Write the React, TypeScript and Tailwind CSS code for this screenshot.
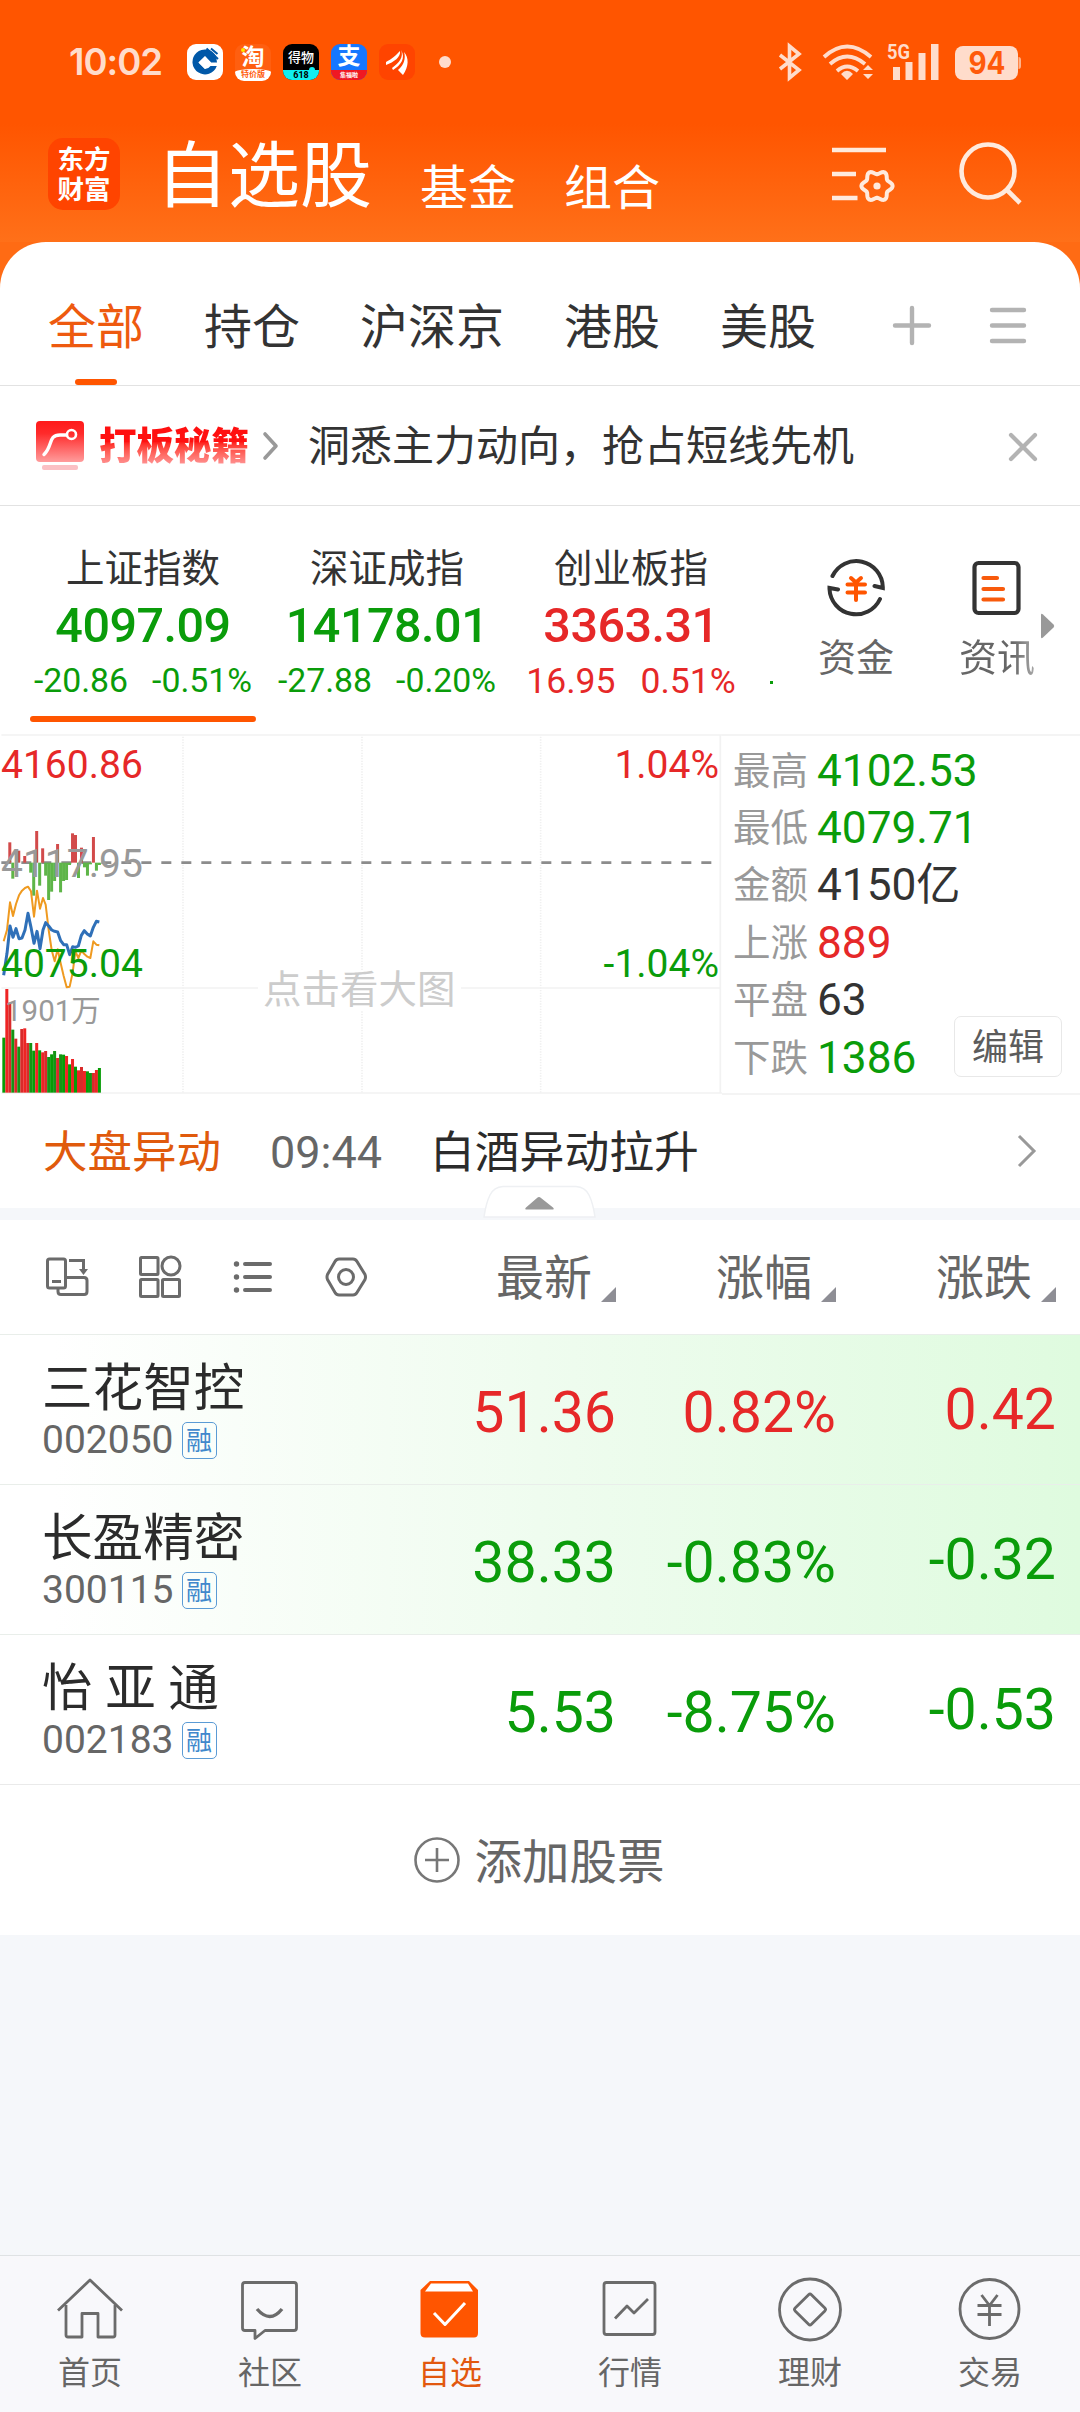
import React from "react";

const RED = "text-[#e62828]";
const GREEN = "text-[#0a9c0a]";

/* ---------- status bar ---------- */

function StatusBar() {
  return (
    <div className="flex h-[124px] items-center pl-[69px] text-[#ffdccb]">
      <span className="w-[118px] font-[Inter] text-[36.500px] leading-none font-semibold tracking-[-1px]">10:02</span>
      <div className="flex gap-3">
        <div className="size-9 rounded-[9px] bg-white">
          <svg viewBox="0 0 36 36" className="size-9">
            <path d="M29 12A12.5 12.5 0 1 0 29.8 22H23.5A7 7 0 0 1 18 25L11.5 18.5 18 12.5 24 18.5H30Z" fill="#0058a8" />
            <path d="M19.5 4.5 31 15M24 4.5 30.5 10" stroke="#0058a8" strokeWidth="2" fill="none" />
            <path d="M18 12 24 18.5 18 25 11.5 18.5Z" fill="#fff" />
          </svg>
        </div>
        <div className="relative flex size-9 flex-col items-center rounded-[9px] bg-[#ff5f10]">
          <span className="h-[24.5px] text-[23px] leading-[27px] font-bold text-white">淘</span>
          <span className="h-[12px] w-full rounded-t-[50%_3px] rounded-b-[9px] bg-white text-center text-[8px] leading-[12px] font-bold text-[#ff5a0a]">特价版</span>
          <div className="absolute top-[4px] left-[6px] size-[4px] rounded-full bg-[#ffe600]" />
        </div>
        <div className="relative flex size-9 flex-col items-center rounded-[9px] bg-black">
          <span className="h-[26px] text-[13px] leading-[28px] font-medium text-white">得物</span>
          <span className="h-[10px] w-full rounded-b-[9px] bg-[#10efef] text-center text-[9px] leading-[10px] font-bold text-black">618</span>
          <div className="absolute top-[23px] left-[26px] size-[6px] rounded-full bg-[#10efef]" />
        </div>
        <div className="flex size-9 flex-col items-center rounded-[9px] bg-[#1677ff]">
          <span className="h-[26px] text-[23px] leading-[26px] font-bold text-white">支</span>
          <span className="h-[10px] w-full rounded-b-[9px] bg-[#f01822] text-center text-[6px] leading-[9px] font-bold text-white">集福啦</span>
        </div>
        <div className="size-9 rounded-[9px] bg-[#ff4400]">
          <svg viewBox="0 0 36 36" className="size-9" fill="#fff">
            <path d="M7 18C13 15 16 12 21 7 22 13 15 18 7 21Z" />
            <path d="M22 6C25 13 20 19 13 24L14 26C22 21 27 14 22 6Z" />
            <path d="M25 8C30 14 30 22 24 31L19 26C25 21 27 14 25 8Z" />
          </svg>
        </div>
      </div>
      <div className="ml-6 size-3 rounded-full bg-[#ffdccb]" />
      <svg className="ml-[326px] h-[44px] w-[245px] overflow-visible" viewBox="777 40 245 44" fill="none">
        <path d="M780 55 799 70 789.500 78V46L799 54 780 69" stroke="#ffdccb" strokeWidth="3.600" />
        <path d="M824 57Q847 36 871 57M830 64Q847 49 865 64M837 71Q847 62 858 71" stroke="#ffdccb" strokeWidth="3.800" />
        <path d="M841 74Q847 67.500 853 74L847 80ZM863 70 868 65 873 70ZM863 74 868 79 873 74Z" fill="#ffdccb" />
        <path d="M893 67h7v13h-7ZM905.500 62h7v18h-7ZM918.500 53h7v27h-7ZM931 44h7.500v36h-7.500Z" fill="#ffdccb" />
        <text x="887" y="59" fontFamily="Roboto" fontSize="20" fontWeight="700" textLength="23" lengthAdjust="spacingAndGlyphs" fill="#ffdccb">5G</text>
        <rect x="955" y="46" width="63" height="34" rx="8" fill="#ffdccb" />
        <path d="M1018.500 57Q1021 57 1021 60V66Q1021 69 1018.500 69Z" fill="#ffb38c" />
        <text x="987" y="74" textAnchor="middle" fontFamily="Inter" fontSize="31" fontWeight="700" textLength="37" lengthAdjust="spacingAndGlyphs" fill="#ff5a0a">94</text>
      </svg>
    </div>
  );
}

/* ---------- title bar ---------- */

// Outline of the six-lobed settings flower.
const flower =
  Array.from({ length: 72 }, (_, i) => {
    const a = (i * Math.PI) / 36;
    const r = 13.7 + 1.9 * Math.cos(6 * a);
    return `${i ? "L" : "M"}${(876 + r * Math.cos(a)).toFixed(2)} ${(186 + r * Math.sin(a)).toFixed(2)}`;
  }).join("") + "Z";

function TitleBar() {
  return (
    <div className="flex h-[118px] text-white">
      <div className="mt-[14px] ml-12 flex size-[72px] flex-col items-center rounded-[15px] bg-[#ff4400] pt-[7px] text-[26.500px] leading-[30px] font-bold">
        <span>东方</span>
        <span>财富</span>
      </div>
      <span className="mt-[15px] ml-[36px] text-[72px] leading-[76px]">自选股</span>
      <span className="mt-[39px] ml-[48px] text-[48px] leading-[52px]">基金</span>
      <span className="mt-[39px] ml-[48px] text-[48px] leading-[52px]">组合</span>
      <svg className="mt-[18px] ml-[171px] h-[70px] w-[192px]" viewBox="830 142 192 70" fill="none" stroke="#ffeadd" strokeWidth="4.600">
        <path d="M831 150h54M831 174h24M831 198h25.500" />
        <path d={flower} strokeWidth="4" strokeLinejoin="round" />
        <circle cx="876" cy="186" r="3.600" fill="#ffeadd" stroke="none" />
        <circle cx="987" cy="171" r="26.500" />
        <path d="M1005.500 189.500 1019 203" />
      </svg>
    </div>
  );
}

/* ---------- category tabs ---------- */

function CategoryTabs() {
  return (
    <div className="flex h-[144px] items-start border-b border-[#e2e2e2] text-[48px] leading-[52px] text-[#333]">
      <div className="relative ml-12 pt-[60px] text-[#ee5a0f]">
        全部
        <div className="absolute top-[137px] left-[27px] h-[6px] w-[42px] rounded-full bg-[#ff5500]" />
      </div>
      <span className="ml-[60px] pt-[60px]">持仓</span>
      <span className="ml-[60px] pt-[60px]">沪深京</span>
      <span className="ml-[60px] pt-[60px]">港股</span>
      <span className="ml-[60px] pt-[60px]">美股</span>
      <svg className="mt-[60px] ml-[72px] h-12 w-[142px]" viewBox="888 302 142 48" stroke="#b3b3b3" strokeWidth="4.400" strokeLinecap="round">
        <path d="M895 325.500H929M912 308V343M992 310h32M992 325.500h32M992 341h32" />
      </svg>
    </div>
  );
}

function PromoRow() {
  return (
    <div className="flex h-[120px] items-center border-b border-[#e2e2e2] pl-9">
      <svg className="h-[50px] w-12" viewBox="0 0 48 50">
        <defs>
          <linearGradient id="promo" x1="0" y1="0" x2="0" y2="1">
            <stop offset="0" stopColor="#ff1a1a" />
            <stop offset="0.3" stopColor="#ff2a2a" />
            <stop offset="1" stopColor="#ff9c9c" />
          </linearGradient>
        </defs>
        <rect width="48" height="41" rx="4" fill="url(#promo)" />
        <path d="M8 33.500C17 25 12 14 24 14H30" stroke="#fff" strokeWidth="3.400" fill="none" strokeLinecap="round" />
        <circle cx="35.500" cy="13.500" r="4.500" stroke="#fff" strokeWidth="2.600" fill="none" />
        <rect x="6" y="44" width="36" height="5" rx="2" fill="#fbc0c4" />
      </svg>
      <span className="ml-[15px] w-[150px] bg-gradient-to-b from-[#ff1010] from-40% to-[#ff8f8f] to-90% bg-clip-text text-[37.500px] leading-[44px] font-black text-transparent">打板秘籍</span>
      <svg className="ml-[13px] h-[30px] w-[18px]" viewBox="0 0 18 30" fill="none" stroke="#999" strokeWidth="3.600" strokeLinecap="round" strokeLinejoin="round">
        <path d="M3 3 14 15 3 27" />
      </svg>
      <span className="ml-[28px] w-[561px] pt-[2px] text-[42px] leading-[46px] whitespace-nowrap text-[#333]">洞悉主力动向，抢占短线先机</span>
      <svg className="mt-[2px] ml-[138px] h-8 w-8" viewBox="0 0 32 32" stroke="#b3b3b3" strokeWidth="4.200" strokeLinecap="round">
        <path d="M4 4 28 28M28 4 4 28" />
      </svg>
    </div>
  );
}

/* ---------- market indices ---------- */

const indices = [
  { name: "上证指数", value: "4097.09", diff: "-20.86", pct: "-0.51%", up: false, active: true },
  { name: "深证成指", value: "14178.01", diff: "-27.88", pct: "-0.20%", up: false, active: false },
  { name: "创业板指", value: "3363.31", diff: "16.95", pct: "0.51%", up: true, active: false },
];

function IndexStrip() {
  return (
    <div className="flex h-[228px] pl-[21px]">
      {indices.map((i) => (
        <div key={i.name} className="relative flex w-[244px] flex-col items-center">
          <span className="mt-[42px] text-[38.500px] leading-[42px] text-[#333]">{i.name}</span>
          <span className={`mt-[10px] text-[48.500px] leading-[52px] font-medium tracking-[-0.5px] ${i.up ? RED : GREEN}`}>{i.value}</span>
          <span className={`mt-[9px] flex leading-[40px] ${i.up ? `gap-[25px] text-[35.500px] ${RED}` : `gap-[24px] text-[33.800px] ${GREEN}`}`}>
            <span>{i.diff}</span>
            <span>{i.pct}</span>
          </span>
          {i.active && <div className="absolute top-[210px] left-[9px] h-[6px] w-[226px] rounded-full bg-[#ff5500]" />}
        </div>
      ))}
      <div className="mt-[175px] ml-[17px] h-[3px] w-[3px] bg-[#0a9c0a]" />
      <div className="ml-[43px] flex w-[80px] flex-col items-center pt-[52px]">
        <svg className="h-[60px] w-[60px]" viewBox="826 557 60 60" fill="none" strokeLinecap="round" strokeWidth="4">
          <path d="M832.500 575A26.500 26.500 0 0 1 882.800 586V587L874.500 585M880 598A26.500 26.500 0 0 1 829.500 588V587L838 588.500" stroke="#333" />
          <path d="M851 577 856 581.500 861 577M847.500 583.500H865M847.500 591.500H865M856 582V599" stroke="#ff5500" />
        </svg>
        <span className="mt-[19px] text-[38px] leading-[42px] text-[#666]">资金</span>
      </div>
      <div className="ml-[61px] flex w-[80px] flex-col items-center pt-[52px]">
        <svg className="h-[60px] w-[60px]" viewBox="968 557 60 60" fill="none" strokeLinecap="round" strokeWidth="4.200">
          <rect x="975.500" y="562" width="44" height="50" rx="4" stroke="#333" />
          <path d="M984.500 577H998M984.500 588H1004M984.500 598.500H1004" stroke="#f85a0c" />
        </svg>
        <span className="mt-[19px] bg-gradient-to-r from-[#666] from-70% to-[#aaa] bg-clip-text text-[38px] leading-[42px] text-transparent">资讯</span>
      </div>
      <svg className="mt-[107px] h-[26px] w-[18px]" viewBox="0 0 18 26">
        <path d="M4 2V24Q4 26 6 24.500L16.500 14.500Q18 13 16.500 11.500L6 1.500Q4 0 4 2Z" fill="#999" />
      </svg>
    </div>
  );
}

/* ---------- minute chart ---------- */

// Volume bar tops in chart units, "r" rising and "g" falling.
const volume: [string, number][] = [
  ["g", 923], ["r", 777], ["r", 818], ["g", 899], ["r", 926], ["g", 950], ["r", 897], ["r", 895], ["r", 939],
  ["g", 939], ["g", 962], ["r", 939], ["g", 961], ["r", 967], ["r", 963], ["g", 981], ["g", 973], ["g", 963],
  ["r", 984], ["g", 973], ["g", 974], ["r", 978], ["g", 1003], ["r", 987], ["g", 1010], ["r", 1021], ["r", 1011],
  ["r", 1023], ["g", 1024], ["g", 1029], ["r", 1029], ["r", 1020], ["g", 1014],
];

// Momentum bars around the previous close: [slot, end].
const momentum: [number, number][] = [
  [2, 337], [5, 362], [7, 378], [11, 303], [13, 355], [18, 342], [23, 310], [24, 315], [26, 353], [30, 321],
  [3, 446], [9, 428], [10, 497], [12, 467], [14, 437], [15, 510], [16, 485], [17, 453], [19, 487], [20, 453],
  [21, 450], [22, 405], [25, 444], [27, 412], [28, 437], [29, 403], [31, 422], [32, 405],
];

const MID = 398;

function MinuteChart() {
  return (
    <div className="relative h-[361px] w-[722px] text-[39px] leading-[40px]">
      <svg className="block h-[361px] w-[722px]" viewBox="0 0 722 361" fill="none">
        <g transform="translate(0 -4) scale(0.33333)">
          <path d="M549 20V1088M1086 20V1088M1622 20V1088" stroke="#f0f0f0" strokeWidth="5" strokeDasharray="4 4" />
          <path d="M4 15H2166M4 774H2160M4 1089H2166M2161 15V1089" stroke="#f2f2f2" strokeWidth="5" />
          <path d="M4 398H2140" stroke="#8c8c8c" strokeWidth="8" strokeDasharray="30 30" />
          {momentum.map(([i, end]) => (
            <rect key={i} x={7 + i * 8.96} y={Math.min(MID, end)} width="9" height={Math.abs(end - MID)} fill={end < MID ? "#d24a4a" : "#5eb548"} />
          ))}
          {volume.map(([c, top], i) => (
            <rect key={i} x={7 + i * 8.96} y={top} width="9" height={1088 - top} fill={c === "r" ? (i % 2 ? "#ee2424" : "#d92a2a") : i % 2 ? "#149414" : "#069c06"} />
          ))}
        </g>
      </svg>
      <div className="absolute top-[110px] left-[1px] text-[#999]">4117.95</div>
      <svg className="absolute top-0 left-0 h-[361px] w-[722px]" viewBox="0 0 722 361" fill="none">
        <g transform="translate(0 -4) scale(0.33333)" strokeLinejoin="round">
          <path
            d="M11 634 21 600 30 517 39 558 48 522 57 496 66 482 75 474 84 470 93 484 102 560 111 482 120 536 129 504 137 524 146 600 155 660 164 694 173 658 182 700 191 738 200 772 209 770 218 728 226 664 235 684 244 662 253 672 262 680 271 684 280 634 289 644 298 646"
            stroke="#ef9a20"
            strokeWidth="6"
          />
          <path
            d="M11 736 21 670 30 588 39 622 48 596 57 626 66 624 75 600 84 550 93 592 102 640 111 604 120 656 129 600 137 578 146 588 155 600 164 604 173 606 182 632 191 644 200 644 209 674 218 650 226 652 235 648 244 616 253 602 262 612 271 618 280 592 289 574 298 576"
            stroke="#2f70b8"
            strokeWidth="9"
          />
        </g>
      </svg>
      <div className={`absolute top-[11px] left-[1px] ${RED}`}>4160.86</div>
      <div className={`absolute top-[210px] left-[1px] ${GREEN}`}>4075.04</div>
      <div className="absolute top-[257px] left-[5px] text-[29.500px] text-[#999]">1901万</div>
      <div className={`absolute top-[11px] right-[3px] ${RED}`}>1.04%</div>
      <div className={`absolute top-[210px] right-[3px] ${GREEN}`}>-1.04%</div>
      <div className="absolute top-[236px] left-[258px] bg-white px-[5px] text-[38.500px] text-[#ccc]">点击看大图</div>
    </div>
  );
}

const stats = [
  { label: "最高", value: "4102.53", color: GREEN },
  { label: "最低", value: "4079.71", color: GREEN },
  { label: "金额", value: "4150亿", color: "text-[#333]" },
  { label: "上涨", value: "889", color: RED },
  { label: "平盘", value: "63", color: "text-[#333]" },
  { label: "下跌", value: "1386", color: GREEN },
];

function StatsPanel() {
  return (
    <div className="relative flex-1 border-y-2 border-[#f4f4f4] pt-[6px] pl-[11px]">
      {stats.map((s) => (
        <div key={s.label} className="flex h-[57.400px] items-center leading-[50px]">
          <span className="w-[84px] text-[37.500px] text-[#999]">{s.label}</span>
          <span className={`text-[44.200px] ${s.color}`}>{s.value}</span>
        </div>
      ))}
      <div className="absolute top-[280px] right-[18px] flex h-[61px] w-[108px] items-center justify-center rounded-[7px] border border-[#e8e8e8] bg-white pt-[3px] text-[36px] leading-none text-[#5c5c5c]">
        编辑
      </div>
    </div>
  );
}

/* ---------- news ---------- */

function NewsRow() {
  return (
    <div className="relative flex h-[125px] items-start border-b-[12px] border-[#f5f7fa]">
      <span className="mt-[33px] ml-[43px] w-[227px] text-[44.500px] leading-[50px] text-[#e05a0c]">大盘异动</span>
      <span className="mt-[33px] w-[160px] text-[45px] leading-[50px] text-[#666]">09:44</span>
      <span className="mt-[33px] w-[585px] text-[44.800px] leading-[50px] text-[#2b2b2b]">白酒异动拉升</span>
      <svg className="mt-[38px] h-[36px] w-[24px]" viewBox="0 0 24 36" fill="none" stroke="#999" strokeWidth="3">
        <path d="M4 3 19 18 4 33" />
      </svg>
      <svg className="absolute top-[90px] left-[483px] h-[34px] w-[114px]" viewBox="0 0 114 34">
        <path d="M1 32Q3 18 7 10Q11 2 20 1.500H93Q102 2 106 10Q110 18 112 32Z" fill="#fff" stroke="#eef0f3" strokeWidth="1.500" />
        <path d="M43 22.500 54 13Q56 11 58 13L70 22.500Q72 24.500 69 24.500H44Q41 24.500 43 22.500Z" fill="#999" />
      </svg>
    </div>
  );
}

/* ---------- watch list ---------- */

function ListHeader() {
  return (
    <div className="flex h-[114px] items-start text-[48px] leading-[52px] text-[#666]">
      <svg className="mt-[33px] ml-[44px] h-[48px] w-[326px]" viewBox="44 1253 326 48" fill="none" stroke="#6b6b6b" strokeWidth="3">
        <rect x="47.500" y="1259" width="18" height="29" rx="2" />
        <path d="M52 1281.500h9M69 1260.500H83.500V1272" />
        <path d="M79 1269H88L83.500 1275Z" fill="#6b6b6b" stroke="none" />
        <path d="M66 1277.500H84Q87 1277.500 87 1280.500V1291.500Q87 1294.500 84 1294.500H61Q58 1294.500 58 1291.500V1288.500" />
        <rect x="140.500" y="1257.500" width="17.500" height="17" rx="1" />
        <circle cx="171" cy="1266" r="9" />
        <rect x="140.500" y="1279.500" width="17.500" height="17" rx="1" />
        <rect x="162.500" y="1279.500" width="17" height="17" rx="1" />
        <path d="M245 1264h25M245 1277h25M245 1290h25" strokeWidth="4" strokeLinecap="round" />
        <path d="M236.500 1264h.01M236.500 1277h.01M236.500 1290h.01" strokeWidth="5.400" strokeLinecap="round" />
        <path d="M339 1259H353Q355.500 1259 357 1261.500L365 1274.500Q366 1277 365 1279.500L357 1292.500Q355.500 1295 353 1295H339Q336.500 1295 335 1292.500L327.500 1279.500Q326.500 1277 327.500 1274.500L335 1261.500Q336.500 1259 339 1259Z" />
        <circle cx="346" cy="1277" r="7.500" />
      </svg>
      {["最新", "涨幅", "涨跌"].map((t, i) => (
        <div key={t} className={`flex justify-end ${i === 0 ? "w-[246px]" : "w-[220px]"}`}>
          <span className="mt-[33px]">{t}</span>
          <svg className="mt-[67px] ml-[9px] size-[15px]" viewBox="0 0 15 15">
            <path d="M15 0V15H0Z" fill="#8e8e95" />
          </svg>
        </div>
      ))}
    </div>
  );
}

const stocks = [
  { name: "三花智控", code: "002050", price: "51.36", pct: "0.82%", diff: "0.42", up: true, flash: true },
  { name: "长盈精密", code: "300115", price: "38.33", pct: "-0.83%", diff: "-0.32", up: false, flash: true },
  { name: "怡 亚 通", code: "002183", price: "5.53", pct: "-8.75%", diff: "-0.53", up: false, flash: false },
];

function StockRow({ s }: { s: (typeof stocks)[number] }) {
  return (
    <div
      className={`flex h-[150px] border-t border-[#e9eeea] ${s.flash ? "bg-gradient-to-r from-white from-5% via-[#effcef] via-50% to-[#dffbdf]" : "bg-white"}`}
    >
      <div className="w-[316px] pl-[42px]">
        <div className="mt-[27px] text-[50.600px] leading-[54px] whitespace-nowrap text-[#2b2b2b]">{s.name}</div>
        <div className="mt-[3px] flex items-center">
          <span className="text-[39px] leading-[42px] text-[#666]">{s.code}</span>
          <span className="ml-[8px] flex h-[37px] w-[35px] items-center justify-center rounded-[5px] border-[1.500px] border-[#5b9bd5] pt-px text-[26px] leading-none text-[#4088cc]">融</span>
        </div>
      </div>
      <div className={`flex text-[57.200px] leading-[60px] ${s.up ? RED : GREEN}`}>
        <span className="mt-[48px] w-[300px] text-right">{s.price}</span>
        <span className="mt-[48px] w-[220px] text-right">{s.pct}</span>
        <span className="mt-[45px] w-[220px] text-right">{s.diff}</span>
      </div>
    </div>
  );
}

function AddStock() {
  return (
    <div className="flex h-[151px] items-center justify-center border-t border-[#eaeaea] pr-[3px] text-[#666]">
      <svg className="mr-[14px] size-[48px]" viewBox="0 0 48 48" fill="none" stroke="#777" strokeWidth="2.600">
        <circle cx="24" cy="24" r="21.500" />
        <path d="M24 12V36M12 24H36" />
      </svg>
      <span className="pt-[5px] text-[47.500px] leading-[52px]">添加股票</span>
    </div>
  );
}

/* ---------- bottom navigation ---------- */

const navIcons: Record<string, React.ReactNode> = {
  首页: (
    <>
      <path d="M3 35.500 35 5 67 35.500" />
      <path d="M11 30V60Q11 62 13 62H27V38.500H43V62H58Q60 62 60 60V30" />
    </>
  ),
  社区: (
    <>
      <path d="M10 7.500H59Q61.500 7.500 61.500 10V53Q61.500 55.500 59 55.500H30L20 63.500V55.500H10Q7.500 55.500 7.500 53V10Q7.500 7.500 10 7.500Z" />
      <path d="M22 34Q35 49 47 34" strokeWidth="3.400" />
    </>
  ),
  自选: (
    <>
      <path d="M15 6H54L63 15V58Q63 62.500 59 62.500H10Q5.500 62.500 5.500 58V15Z" fill="#ff5500" stroke="none" />
      <path d="M16 8.500H53L58 16.500H10Z" fill="#fff" stroke="none" />
      <path d="M19 38 30 49.500 50 28" stroke="#fff" strokeWidth="3" />
    </>
  ),
  行情: (
    <>
      <rect x="9" y="7.500" width="51" height="52" rx="2.500" />
      <path d="M20 43.500 32 31 39 38 53 24" />
    </>
  ),
  理财: (
    <>
      <circle cx="35" cy="34.500" r="30.500" />
      <rect x="23.500" y="23" width="23" height="23" rx="2" transform="rotate(45 35 34.500)" />
    </>
  ),
  交易: (
    <>
      <circle cx="34.500" cy="34" r="29.500" />
      <path d="M26.500 20 34.500 30.500 42.500 20M22.500 30.500H46.500M22.500 39.500H46.500M34.500 30V51" />
    </>
  ),
};

function BottomNav() {
  return (
    <div className="flex h-[157px] border-t border-[#dfe2e4] bg-[#f8f8fb]">
      {Object.keys(navIcons).map((label) => (
        <div key={label} className={`flex w-[180px] flex-col items-center pt-[19px] ${label === "自选" ? "text-[#e2580f]" : "text-[#666]"}`}>
          <svg className="size-[70px]" viewBox="0 0 70 70" fill="none" stroke="#6b6b6b" strokeWidth="2.800" strokeLinejoin="round">
            {navIcons[label]}
          </svg>
          <span className="mt-[10px] text-[32px] leading-[36px]">{label}</span>
        </div>
      ))}
    </div>
  );
}

export default function App() {
  return (
    <div className="flex h-[2412px] w-[1080px] flex-col overflow-hidden bg-[#f5f7fa] font-[Roboto,'Noto_Sans_CJK_SC',sans-serif]">
      <div className="bg-[linear-gradient(to_bottom,#ff5500_0px,#ff5500_124px,#ff7019_242px)]">
        <StatusBar />
        <TitleBar />
      </div>
      <div className="bg-[#ff6b14]">
        <div className="rounded-t-[46px] bg-white">
          <CategoryTabs />
          <PromoRow />
          <IndexStrip />
          <div className="flex h-[361px]">
            <MinuteChart />
            <StatsPanel />
          </div>
          <NewsRow />
          <ListHeader />
          {stocks.map((s) => (
            <StockRow key={s.code} s={s} />
          ))}
          <AddStock />
        </div>
      </div>
      <div className="flex-1" />
      <BottomNav />
    </div>
  );
}
